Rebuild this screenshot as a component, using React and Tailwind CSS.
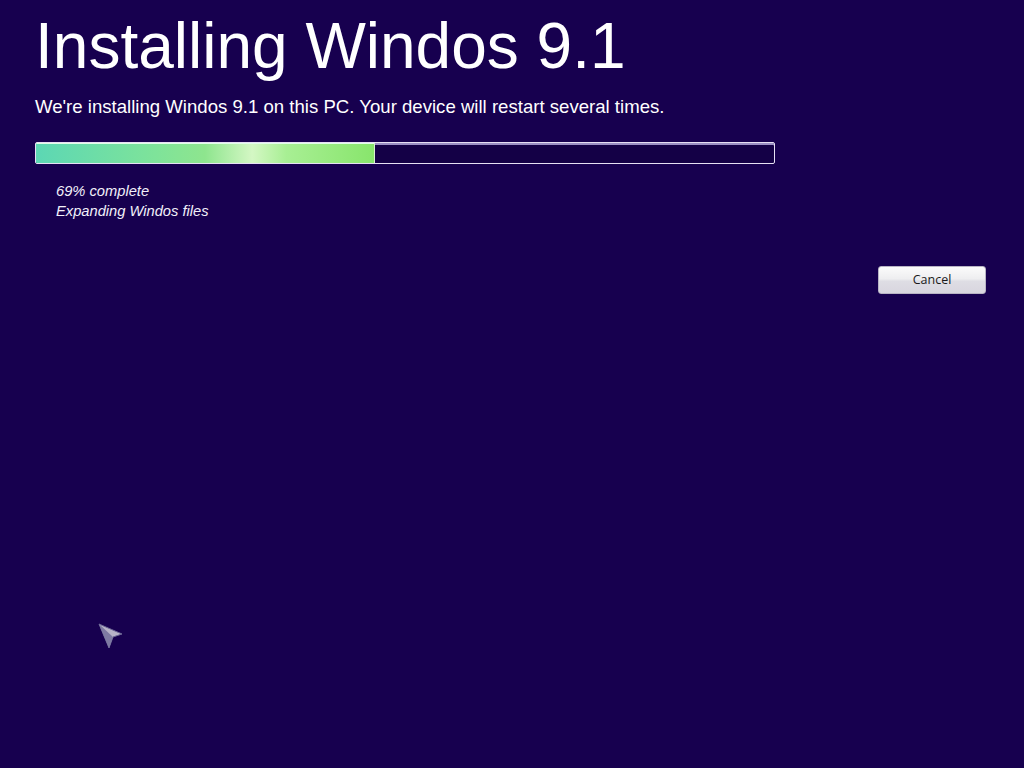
import React from "react";

export default function App() {
  return (
    <div className="relative w-[1024px] h-[768px] overflow-hidden bg-[#17004f] text-white" style={{ fontFamily: '"Liberation Sans", Arial, sans-serif' }}>
      <div className="pl-[35px] pt-[10px]">
        <h1 className="text-[64px] leading-[72px] font-normal">Installing Windos 9.1</h1>
        <p className="mt-[14px] text-[18.6px] leading-[22px]">We're installing Windos 9.1 on this PC. Your device will restart several times.</p>
        <div className="mt-[24px] w-[740px] h-[22px] rounded-[2px] border border-[#e6e0f4] bg-[#140046] flex overflow-hidden shadow-[inset_0_2px_0_#9c90c4]">
          <div className="w-[339px] h-full border-r border-[#d8f0d0] bg-[linear-gradient(90deg,#5cd7b4_0%,#7ee39a_35%,#8ee58e_50%,#d4f7c4_64%,#a8ef94_74%,#88e56c_100%)] shadow-[inset_0_1px_0_#e0ffe8]" />
        </div>
        <div className="mt-[17px] pl-[21px] italic text-[14.7px] leading-[20px] text-[#f2f0fa]">
          <div>69% complete</div>
          <div>Expanding Windos files</div>
        </div>
      </div>
      <div className="flex justify-end pr-[38px] mt-[45px]">
        <button className="w-[108px] h-[28px] rounded-[3px] border border-[#b8b4c4] bg-[linear-gradient(180deg,#fbfbfb_0%,#eeeef0_45%,#dedde4_55%,#d8d6df_100%)] text-[12.5px] text-[#1a1a1a]" style={{ fontFamily: '"Open Sans", "Noto Sans", sans-serif' }}>
          Cancel
        </button>
      </div>
      <svg className="absolute left-[97px] top-[622px]" width="28" height="28" viewBox="0 0 28 28">
        <polygon points="2,2 25,12 16,15 12,26" fill="#b8b4c8" stroke="#6a6494" strokeWidth="1" />
        <polygon points="2,2 16,15 12,26" fill="#7e7aa2" />
      </svg>
    </div>
  );
}
